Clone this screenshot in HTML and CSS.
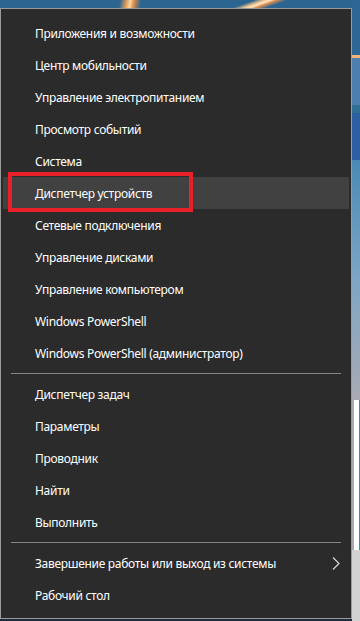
FILE: index.html
```html
<!DOCTYPE html>
<html lang="ru">
<head>
  <meta charset="UTF-8">
  <meta name="viewport" content="width=device-width, initial-scale=1.0">
  <title>Меню Win+X</title>
  <link rel="stylesheet" href="styles.css">
</head>
<body>
  <div class="screen">
    <div class="wall-top"></div>
    <div class="strip">
      <div class="s1"></div>
      <div class="s2"></div>
      <div class="s3"></div>
      <div class="s4"></div>
      <div class="s5"></div>
      <div class="s6"></div>
      <div class="s7"></div>
      <div class="s8"></div>
    </div>

    <div class="menu">
      <div class="item">Приложения и возможности</div>
      <div class="item">Центр мобильности</div>
      <div class="item">Управление электропитанием</div>
      <div class="item">Просмотр событий</div>
      <div class="item">Система</div>
      <div class="item active">Диспетчер устройств<span class="mark"></span></div>
      <div class="item">Сетевые подключения</div>
      <div class="item">Управление дисками</div>
      <div class="item">Управление компьютером</div>
      <div class="item">Windows PowerShell</div>
      <div class="item">Windows PowerShell (администратор)</div>
      <div class="sep"></div>
      <div class="item">Диспетчер задач</div>
      <div class="item">Параметры</div>
      <div class="item">Проводник</div>
      <div class="item">Найти</div>
      <div class="item">Выполнить</div>
      <div class="sep"></div>
      <div class="item sub">Завершение работы или выход из системы
        <svg class="chev" width="8" height="13" viewBox="0 0 8 13"><path d="M1 0.5 L7 6.5 L1 12.5" fill="none" stroke="#d8d8d8" stroke-width="1.2"/></svg>
      </div>
      <div class="item">Рабочий стол</div>
    </div>
  </div>
</body>
</html>
```

FILE: styles.css
```css
html, body {
  margin: 0;
  padding: 0;
}
body {
  width: 360px;
  height: 621px;
  overflow: hidden;
  background: #1d2b3b;
  font-family: 'Noto Sans', 'Segoe UI', Arial, sans-serif;
}
.screen {
  display: grid;
  grid-template-columns: 352px 8px;
  grid-template-rows: 8px 613px;
}
.wall-top {
  grid-column: 1;
  grid-row: 1;
  background:
    linear-gradient(100deg, transparent 34%, #e8a25a 36%, #f6d7a8 37%, #e08b45 38%, transparent 40%),
    linear-gradient(160deg, transparent 68%, #f3c58e 71%, #fbe7c7 72.5%, #e48f4c 74%, transparent 77%),
    #2c6690;
}
.strip {
  grid-column: 2;
  grid-row: 1 / 3;
  display: flex;
  flex-direction: column;
}
.s1 { height: 55px; background: #2c6893; }
.s2 { height: 3px; background: #f1b47a; }
.s3 { height: 47px; background: #4c7fae; }
.s4 { height: 8px; background: #2f6f95; }
.s5 { height: 47px; background: #2d5ea2; }
.s6 { height: 240px; background: linear-gradient(#4a8ab6, #7ea6c4 50%, #a9aab3); }
.s7 { height: 150px; background: linear-gradient(90deg, #a8a9b0 0 2px, #fff 2px 7px, #3f8e92 7px); }
.s8 { flex: 1; background: #d2d2d2; }

.menu {
  grid-column: 1;
  grid-row: 2;
  height: 611px;
  box-sizing: border-box;
  background: #2b2b2b;
  border: 1px solid #9a9a9a;
  padding: 8px 0 7px;
}
.item {
  position: relative;
  height: 32px;
  margin: 0 2px;
  padding-left: 32px;
  display: flex;
  align-items: center;
  color: #fff;
  font-size: 12px;
  letter-spacing: -0.3px;
  white-space: nowrap;
}
.item.active {
  background: #414141;
}
.mark {
  position: absolute;
  left: 5px;
  top: -5px;
  width: 185px;
  height: 40px;
  box-sizing: border-box;
  border: 4px solid #e8202a;
}
.sub {
  justify-content: space-between;
  padding-right: 9px;
}
.chev {
  flex: none;
}
.sep {
  height: 1px;
  margin: 4px 10px;
  background: #858585;
}
```
